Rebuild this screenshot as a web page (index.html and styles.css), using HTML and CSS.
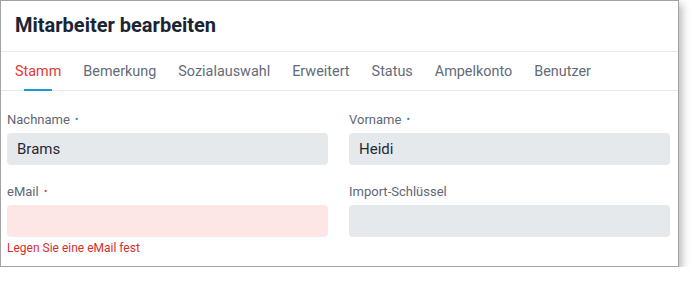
FILE: index.html
```html
<!DOCTYPE html>
<html lang="de">
<head>
<meta charset="utf-8">
<title>Mitarbeiter bearbeiten</title>
<link rel="stylesheet" href="styles.css">
</head>
<body>
<div class="dialog">
  <div class="header">
    <h1 class="title">Mitarbeiter bearbeiten</h1>
  </div>
  <div class="tabs">
    <span class="tab active">Stamm</span>
    <span class="tab">Bemerkung</span>
    <span class="tab">Sozialauswahl</span>
    <span class="tab">Erweitert</span>
    <span class="tab">Status</span>
    <span class="tab">Ampelkonto</span>
    <span class="tab">Benutzer</span>
  </div>
  <div class="form">
    <div class="field">
      <div class="label">Nachname <span class="dot">•</span></div>
      <div class="input">Brams</div>
    </div>
    <div class="field">
      <div class="label">Vorname <span class="dot">•</span></div>
      <div class="input">Heidi</div>
    </div>
    <div class="field">
      <div class="label">eMail <span class="dot error">•</span></div>
      <div class="input invalid"></div>
      <div class="error-text">Legen Sie eine eMail fest</div>
    </div>
    <div class="field">
      <div class="label">Import-Schlüssel</div>
      <div class="input"></div>
    </div>
  </div>
</div>
</body>
</html>
```

FILE: styles.css
```css
* { box-sizing: border-box; }
html, body { margin: 0; padding: 0; background: #fff; }
body { font-family: Roboto, "Liberation Sans", Arial, sans-serif; }

.dialog {
  width: 679px;
  height: 267px;
  border: 1px solid #a3a3a3;
  background: #fff;
  box-shadow: 3px 4px 8px rgba(0, 0, 0, 0.28);
}

.header {
  height: 51px;
  border-bottom: 1px solid #e6e8eb;
  display: flex;
  align-items: center;
  padding-left: 14px;
}
.title {
  margin: 0;
  font-size: 20px;
  font-weight: 700;
  color: #1b2433;
  position: relative;
  top: -1px;
}

.tabs {
  height: 39px;
  border-bottom: 1px solid #e6e8eb;
  display: flex;
  align-items: stretch;
  padding-left: 14px;
  gap: 22px;
}
.tab {
  position: relative;
  display: flex;
  align-items: center;
  font-size: 14.4px;
  color: #636b78;
}
.tab.active { color: #e53935; }
.tab.active::after {
  content: "";
  position: absolute;
  left: 9px;
  width: 28px;
  bottom: -1px;
  height: 2px;
  background: #1a9bd7;
}

.form {
  display: grid;
  grid-template-columns: 321px 321px;
  column-gap: 21px;
  padding: 21px 0 0 6px;
}
.field { display: flex; flex-direction: column; height: 72px; }
.label {
  font-size: 13px;
  color: #5f6774;
  height: 21px;
  line-height: 16px;
}
.dot { color: #1e88b5; font-size: 10px; position: relative; top: -1px; margin-left: 2px; }
.dot.error { color: #e53935; }
.input {
  height: 32px;
  border-radius: 4px;
  background: #e6e9ec;
  font-size: 15px;
  font-weight: 400;
  color: #1f2937;
  padding: 0 10px;
  display: flex;
  align-items: center;
}
.input.invalid { background: #fde7e6; }
.error-text {
  margin-top: 4px;
  font-size: 12px;
  color: #d32f2f;
}
```
